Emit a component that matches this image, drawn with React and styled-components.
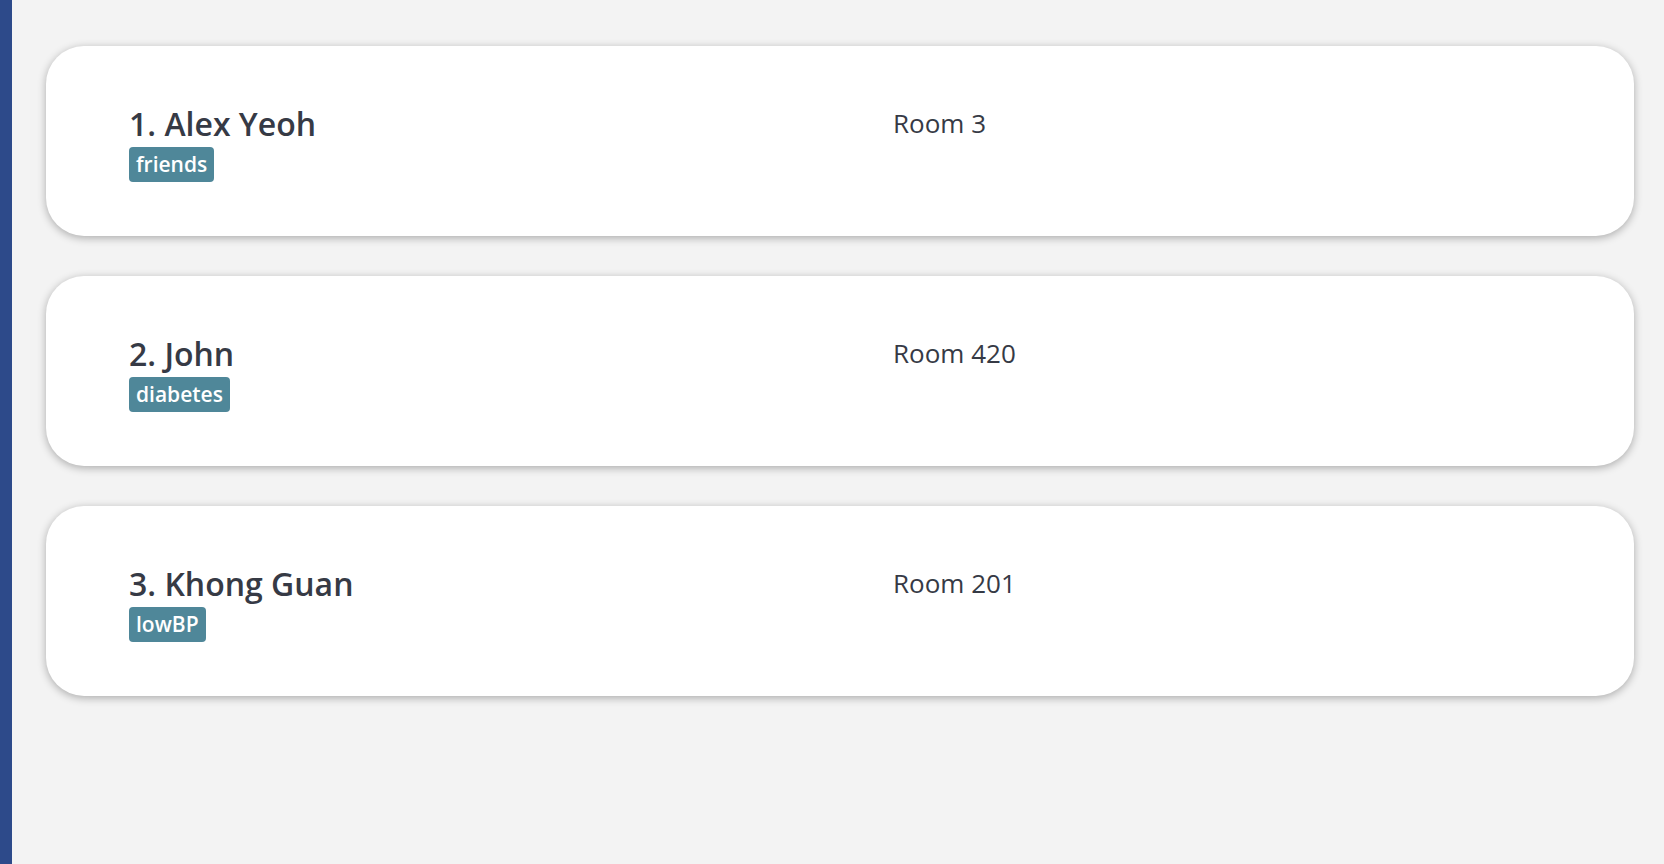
import React from 'react';
import styled, { createGlobalStyle } from 'styled-components';

const GlobalStyle = createGlobalStyle`
  html, body {
    margin: 0;
    padding: 0;
    background: #f3f3f3;
    font-family: "Open Sans", "Noto Sans", sans-serif;
  }
`;

const Page = styled('div')`
  display: flex;
  min-height: 864px;
`;

const SideBar = styled('div')`
  width: 12px;
  flex-shrink: 0;
  background-color: #2d4a8a;
`;

const Main = styled('main')`
  flex: 1;
  padding: 46px 30px 46px 34px;
  display: flex;
  flex-direction: column;
  gap: 40px;
`;

const Card = styled('div')`
  height: 190px;
  box-sizing: border-box;
  background: white;
  border-radius: 38px;
  box-shadow: 0 2px 8px rgba(0, 0, 0, 0.3);
  padding: 55px 83px 0 83px;
  display: grid;
  grid-template-columns: 764px 1fr;
  align-items: start;
`;

const Info = styled('div')`
  display: flex;
  flex-direction: column;
  align-items: flex-start;
`;

const Name = styled('div')`
  font-size: 32px;
  font-weight: 600;
  color: #363a45;
  line-height: 46px;
`;

const Tag = styled('span')`
  background-color: #4f8799;
  color: white;
  font-size: 21px;
  font-weight: 600;
  line-height: 35px;
  padding: 0 7px;
  border-radius: 4px;
`;

const Room = styled('div')`
  font-size: 26px;
  color: #363a45;
  line-height: 44px;
`;

const patients = [
  { id: 1, name: 'Alex Yeoh', tag: 'friends', room: 'Room 3' },
  { id: 2, name: 'John', tag: 'diabetes', room: 'Room 420' },
  { id: 3, name: 'Khong Guan', tag: 'lowBP', room: 'Room 201' },
];

const App = () => {
  return (
    <>
      <GlobalStyle />
      <Page>
        <SideBar />
        <Main>
          {patients.map(p => (
            <Card key={p.id}>
              <Info>
                <Name>{p.id}. {p.name}</Name>
                <Tag>{p.tag}</Tag>
              </Info>
              <Room>{p.room}</Room>
            </Card>
          ))}
        </Main>
      </Page>
    </>
  );
};

export default App;
